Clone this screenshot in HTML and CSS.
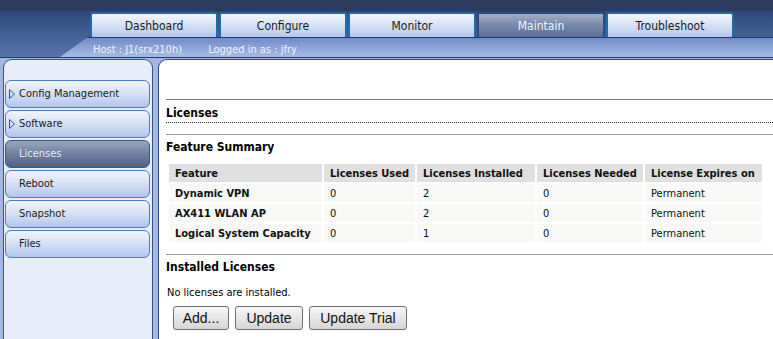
FILE: index.html
```html
<!DOCTYPE html>
<html lang="en">
<head>
    <meta charset="UTF-8">
    <title>Maintain - Licenses</title>
    <link rel="stylesheet" href="styles.css">
</head>
<body>
    <!-- Bandeau supérieur avec les onglets -->
    <div class="header">
        <div class="tabs">
            <div class="tab">Dashboard</div>
            <div class="tab">Configure</div>
            <div class="tab">Monitor</div>
            <div class="tab active">Maintain</div>
            <div class="tab">Troubleshoot</div>
        </div>
        <div class="infobar">
            <span>Host : J1(srx210h)</span>
            <span>Logged in as : jfry</span>
        </div>
    </div>

    <div class="main">
        <!-- Menu de gauche -->
        <div class="sidebar">
            <div class="menu-item">
                <svg class="arrow" width="6" height="10" viewBox="0 0 6 10"><path d="M0.5 0.5 L5.5 5 L0.5 9.5 Z" fill="none" stroke="#2f4fc8" stroke-width="1"/></svg>
                Config Management
            </div>
            <div class="menu-item">
                <svg class="arrow" width="6" height="10" viewBox="0 0 6 10"><path d="M0.5 0.5 L5.5 5 L0.5 9.5 Z" fill="none" stroke="#2f4fc8" stroke-width="1"/></svg>
                Software
            </div>
            <div class="menu-item active">Licenses</div>
            <div class="menu-item">Reboot</div>
            <div class="menu-item">Snapshot</div>
            <div class="menu-item">Files</div>
        </div>

        <!-- Contenu -->
        <div class="content">
            <h2 class="page-title">Licenses</h2>

            <h3 class="section-title">Feature Summary</h3>
            <table class="licenses">
                <tr>
                    <th class="c1">Feature</th>
                    <th class="c2">Licenses Used</th>
                    <th class="c3">Licenses Installed</th>
                    <th class="c4">Licenses Needed</th>
                    <th class="c5">License Expires on</th>
                </tr>
                <tr>
                    <td class="name">Dynamic VPN</td>
                    <td>0</td>
                    <td>2</td>
                    <td>0</td>
                    <td>Permanent</td>
                </tr>
                <tr>
                    <td class="name">AX411 WLAN AP</td>
                    <td>0</td>
                    <td>2</td>
                    <td>0</td>
                    <td>Permanent</td>
                </tr>
                <tr>
                    <td class="name">Logical System Capacity</td>
                    <td>0</td>
                    <td>1</td>
                    <td>0</td>
                    <td>Permanent</td>
                </tr>
            </table>

            <h3 class="section-title installed">Installed Licenses</h3>
            <p class="note">No licenses are installed.</p>
            <div class="buttons">
                <button class="btn btn-add">Add...</button>
                <button class="btn btn-update">Update</button>
                <button class="btn btn-trial">Update Trial</button>
            </div>
        </div>
    </div>
</body>
</html>
```

FILE: styles.css
```css
body {
    font-family: "DejaVu Sans Condensed", "DejaVu Sans", sans-serif;
    font-size: 11px;
    margin: 0;
    padding: 0;
    width: 773px;
    height: 339px;
    overflow: hidden;
    background-color: #a3b7e1;
}

/* Bandeau supérieur */
.header {
    height: 57px;
    border-bottom: 1px solid #1d3a78;
    background: linear-gradient(to bottom, #2a3b5b 0, #2a3b5b 10px, #30497a 12px, #5874aa 57px);
}

.tabs {
    display: flex;
    padding-left: 90px;
    padding-top: 12px;
    gap: 1px;
}

.tab {
    width: 124px;
    height: 23px;
    line-height: 24px;
    text-align: center;
    font-size: 12px;
    color: #1a1a1a;
    background: linear-gradient(to bottom, #f4f7fd, #dbe5f7 40%, #b3c6ea);
    border: 2px solid #1f6ca8;
    border-bottom: none;
    border-radius: 3px 3px 0 0;
}

.tab.active {
    color: #f0f4fa;
    background: linear-gradient(to bottom, #a3afc3, #7688a8 50%, #5a6f94);
    border-color: #2c4f83;
}

.infobar {
    margin-left: 60px;
    height: 19px;
    line-height: 23px;
    padding-left: 33px;
    color: #f2f5fb;
    background: linear-gradient(to bottom, #6f8cc6, #a7bce6);
    clip-path: polygon(28px 0, 100% 0, 100% 100%, 0 100%);
    border-top: 1px solid #1d3a78;
}

.infobar span {
    margin-right: 23px;
}

/* Zone principale */
.main {
    display: flex;
    padding-top: 1px;
    height: 281px;
}

.sidebar {
    box-sizing: border-box;
    width: 150px;
    margin-left: 3px;
    padding: 20px 2px 0 1px;
    background-color: #e8eef9;
    border: 1px solid #35538f;
    border-bottom: none;
    border-radius: 9px 9px 0 0;
    display: flex;
    flex-direction: column;
    gap: 2px;
}

.menu-item {
    height: 26px;
    line-height: 26px;
    padding-left: 13px;
    color: #1a1a1a;
    background: linear-gradient(to bottom, #f1f5fd, #d7e2f6 45%, #b1c5ec);
    border: 1px solid #4f7cc4;
    border-radius: 6px;
    position: relative;
}

.menu-item .arrow {
    position: absolute;
    left: 3px;
    top: 8px;
}

.menu-item.active {
    color: #e4eaf4;
    background: linear-gradient(to bottom, #9aa6bb, #6f809f 50%, #4f6386);
    border-color: #3d5685;
}

.content {
    flex: 1;
    margin-left: 5px;
    padding-left: 7px;
    background-color: #fff;
    border-left: 1px solid #2b4a86;
    border-top: 1px solid #2b4a86;
    border-radius: 9px 0 0 0;
}

/* Titres */
.page-title {
    margin: 39px 0 0 0;
    padding: 6px 0 2px 0;
    font-size: 12px;
    border-top: 1px solid #7a7a7a;
    border-bottom: 1px dotted #333;
}

.section-title {
    margin: 11px 0 0 0;
    padding: 5px 0 0 0;
    font-size: 12px;
    border-top: 1px solid #999;
}

.section-title.installed {
    margin-top: 10px;
}

/* Tableau des licences */
.licenses {
    border-spacing: 2px;
    margin: 8px 0 0 1px;
}

.licenses th,
.licenses td {
    height: 18px;
    padding: 0 6px;
    text-align: left;
    color: #111;
}

.licenses th {
    background-color: #e0e0e0;
}

.licenses td {
    background-color: #f8f8f6;
}

.licenses td.name {
    font-weight: bold;
}

.c1 { width: 141px; }
.c2 { width: 79px; }
.c3 { width: 106px; }
.c4 { width: 94px; }
.c5 { width: 105px; }

.note {
    margin: 12px 0 0 1px;
}

/* Boutons */
.buttons {
    display: flex;
    gap: 6px;
    margin: 7px 0 0 7px;
}

.btn {
    font-family: "Liberation Sans", Arial, sans-serif;
    font-size: 14px;
    height: 24px;
    padding: 0 8px;
    color: #111;
    background: linear-gradient(to bottom, #f6f6f6, #e6e6e6 50%, #d6d6d6);
    border: 1px solid #707070;
    border-radius: 3px;
}

.btn-add { width: 56px; }
.btn-update { width: 68px; }
.btn-trial { width: 98px; }
```
